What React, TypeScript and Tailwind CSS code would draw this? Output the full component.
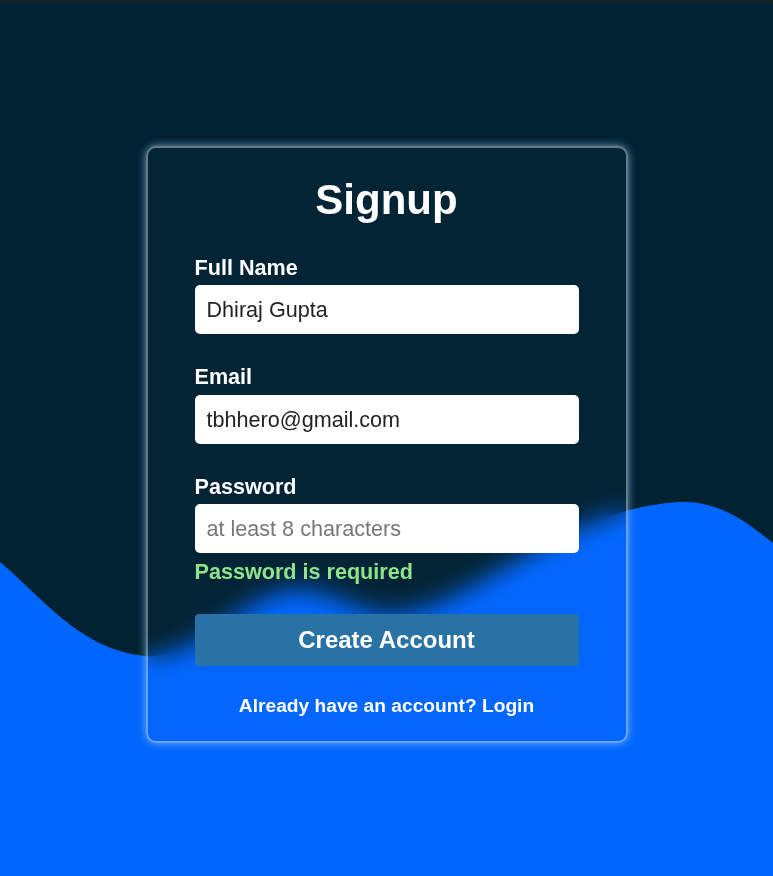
import React, { useState } from 'react';

const Wave: React.FC = () => (
  <svg
    className="absolute inset-0 w-full h-full"
    viewBox="0 0 773 876"
    preserveAspectRatio="none"
  >
    <path
      fill="#0066ff"
      d="M0,562 C40,595 80,650 145,656 C200,660 245,592 295,590 C335,589 355,615 395,614 C470,610 560,508 680,502 C720,500 750,525 773,543 L773,876 L0,876 Z"
    />
  </svg>
);

export default function App() {
  const [name, setName] = useState('Dhiraj Gupta');
  const [email, setEmail] = useState('tbhhero@gmail.com');
  const [password, setPassword] = useState('');

  return (
    <div className="relative h-[876px] w-full overflow-hidden bg-[#012233] font-['Liberation_Sans',Arial,sans-serif]">
      <Wave />
      <div className="relative h-[2px] w-full bg-[#1e1f21]" />
      <div className="relative flex justify-center pt-[144px]">
        <form
          onSubmit={(e) => e.preventDefault()}
          className="w-[482px] rounded-[10px] border-2 border-white/40 bg-white/[0.01] px-[47px] pt-[29px] pb-[25px] backdrop-blur-[12px] shadow-[0_0_8px_rgba(150,200,240,0.75)]"
        >
          <h2 className="text-center text-[42px] font-bold leading-[46px] text-white">Signup</h2>

          <div className="mt-[33px]">
            <label className="block text-[21.6px] font-bold leading-[23px] text-white">Full Name</label>
            <input
              value={name}
              onChange={(e) => setName(e.target.value)}
              className="mt-[6px] block h-[49px] w-full rounded-[5px] bg-white px-3 text-[21.6px] text-[#222] outline-none"
            />
          </div>

          <div className="mt-[31px]">
            <label className="block text-[21.6px] font-bold leading-[23px] text-white">Email</label>
            <input
              value={email}
              onChange={(e) => setEmail(e.target.value)}
              className="mt-[7px] block h-[49px] w-full rounded-[5px] bg-white px-3 text-[21.6px] text-[#222] outline-none"
            />
          </div>

          <div className="mt-[31px]">
            <label className="block text-[21.6px] font-bold leading-[23px] text-white">Password</label>
            <input
              type="password"
              value={password}
              placeholder="at least 8 characters"
              onChange={(e) => setPassword(e.target.value)}
              className="mt-[6px] block h-[49px] w-full rounded-[5px] bg-white px-3 text-[21.6px] text-[#222] outline-none placeholder:text-[#777]"
            />
            <p className="mt-[7px] text-[21.6px] font-bold leading-[23px] text-[#8ee58c]">Password is required</p>
          </div>

          <button
            type="submit"
            className="mt-[31px] block h-[52px] w-full rounded-[4px] bg-[#2872a4] text-[24px] font-bold text-white"
          >
            Create Account
          </button>

          <p className="mt-[29px] text-center text-[19.2px] font-bold leading-[21px] text-white">
            Already have an account? Login
          </p>
        </form>
      </div>
    </div>
  );
}
